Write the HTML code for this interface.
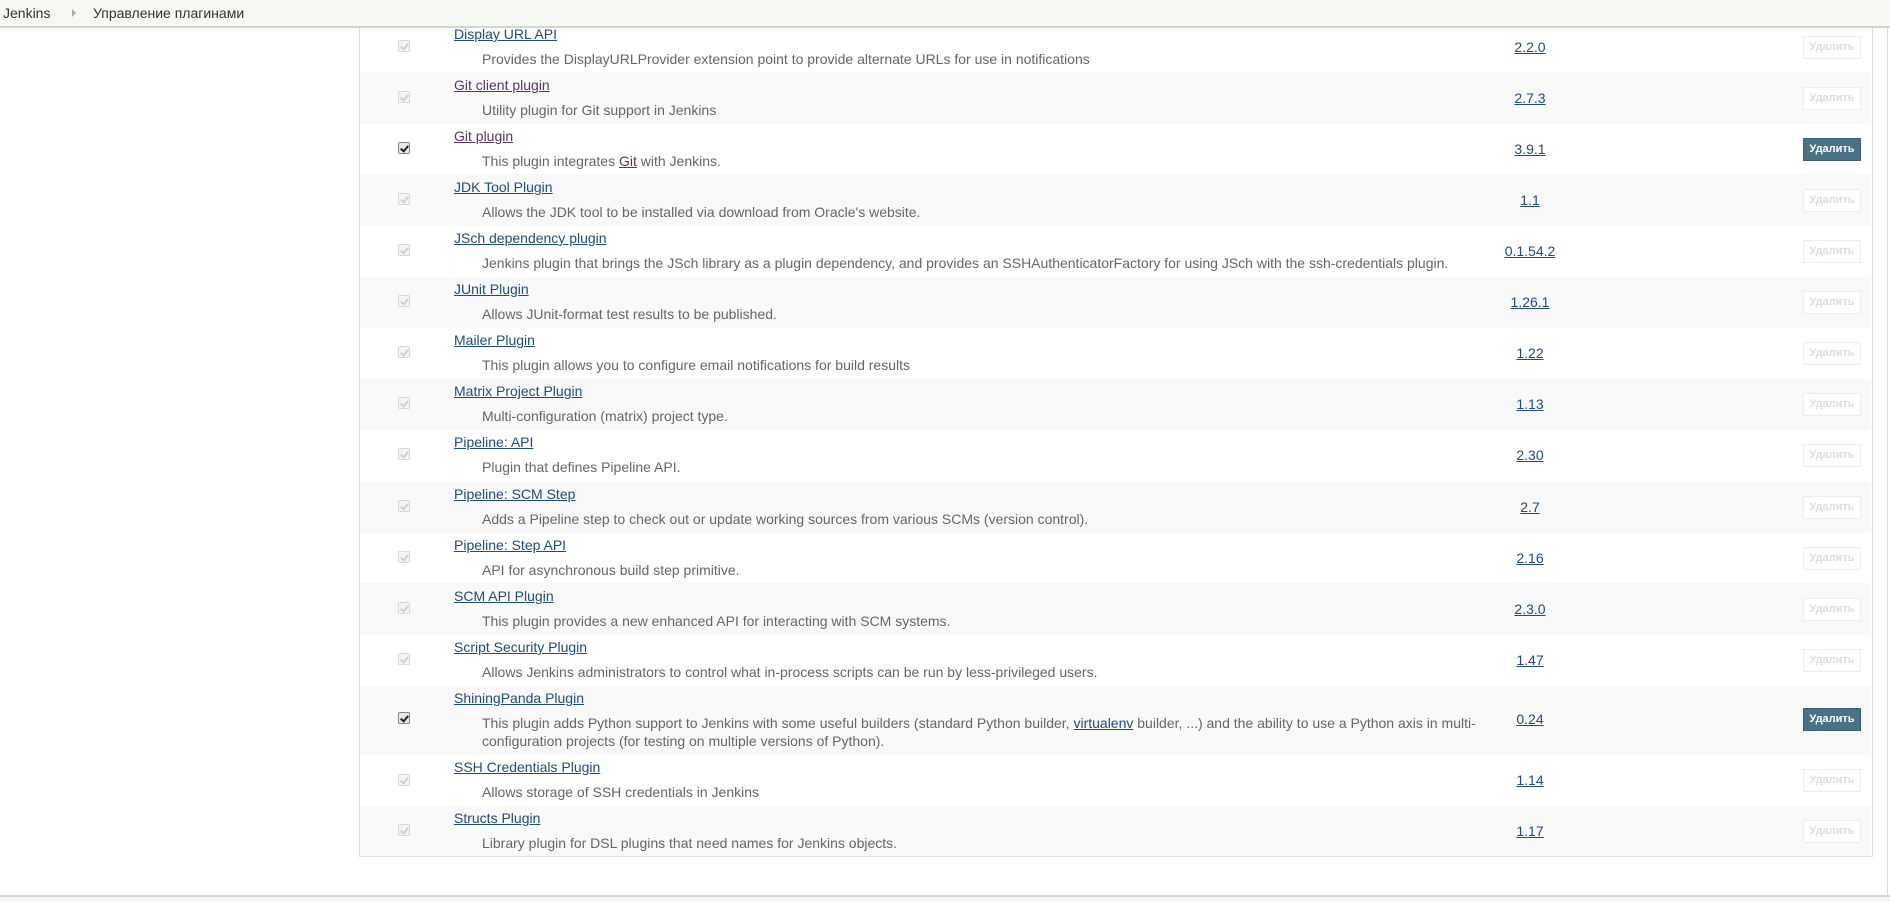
<!DOCTYPE html>
<html><head><meta charset="utf-8"><style>
body{margin:0;width:1890px;height:900px;overflow:hidden;background:#fff;font-family:"Liberation Sans",Arial,sans-serif;position:relative}
.hdr{position:absolute;left:0;top:0;width:1890px;height:26px;background:#f6f8f2;border-bottom:2px solid #d3d7cf;z-index:5;font-size:14px;color:#333}
.hdr .a{position:absolute;left:3px;top:5px}
.hdr .s{position:absolute;left:72px;top:9px;width:0;height:0;border-left:4px solid #aaa;border-top:4px solid transparent;border-bottom:4px solid transparent}
.hdr .b{position:absolute;left:93px;top:5px}
.tbl{position:absolute;left:359px;top:0;width:1512px;height:856px;border:1px solid #e2e2e2;border-top:none}
.row{position:absolute;left:360px;width:1511px}
.row.alt{background:#f9f9f9}
.cb{position:absolute;left:398px;width:12px;height:12px;border:1px solid #d8d8d8;border-radius:2px;background:#f4f4f4;box-sizing:border-box}
.cb::after{content:"";position:absolute;left:3px;top:1px;width:3px;height:6px;border:solid #d0d0d0;border-width:0 2px 2px 0;transform:rotate(40deg)}
.cb.on{border-color:#888;background:#e8e8e8}
.cb.on::after{border-color:#222}
.nm{position:absolute;left:454px;color:#204a87;text-decoration:underline;white-space:nowrap;font-size:14px}
.nm.v{color:#5c3566}
.ds{position:absolute;left:482px;color:#666;width:1000px;line-height:18px;font-size:14px}
.ds a{color:#204a87;text-decoration:underline}
.ds a.v{color:#5c3566}
.ver{position:absolute;left:1480px;width:100px;text-align:center;color:#204a87;text-decoration:underline;font-size:14px}
.btn{position:absolute;left:1803px;width:58px;height:23px;box-sizing:border-box;border:1px solid #eee;font-size:11px;font-weight:bold;color:#ddd;text-align:center;line-height:21px;background:#fff}
.btn.on{background:#4a7186;border-color:#3d6275;color:#fff}
.ftr{position:absolute;left:0;top:895px;width:1890px;height:5px;background:#f6f8f2;border-top:2px solid #d3d7cf}
.edge{position:absolute;left:1887px;top:28px;width:1px;height:867px;background:#ddd}
</style></head><body>
<div class="hdr"><span class="a">Jenkins</span><span class="s"></span><span class="b">Управление плагинами</span></div>
<div class="tbl"></div>
<div class="edge"></div>
<div class="ftr"></div>

<div class="row" style="top:21px;height:51px"></div>
<div class="cb" style="top:40px"></div>
<div class="nm" style="top:26px">Display URL API</div>
<div class="ds" style="top:50px">Provides the DisplayURLProvider extension point to provide alternate URLs for use in notifications</div>
<div class="ver" style="top:39px">2.2.0</div>
<div class="btn" style="top:36px">Удалить</div>

<div class="row alt" style="top:72px;height:52px"></div>
<div class="cb" style="top:91px"></div>
<div class="nm v" style="top:77px">Git client plugin</div>
<div class="ds" style="top:101px">Utility plugin for Git support in Jenkins</div>
<div class="ver" style="top:90px">2.7.3</div>
<div class="btn" style="top:87px">Удалить</div>

<div class="row" style="top:124px;height:50px"></div>
<div class="cb on" style="top:142px"></div>
<div class="nm v" style="top:128px">Git plugin</div>
<div class="ds" style="top:152px">This plugin integrates <a class="v">Git</a> with Jenkins.</div>
<div class="ver" style="top:141px">3.9.1</div>
<div class="btn on" style="top:138px">Удалить</div>

<div class="row alt" style="top:174px;height:52px"></div>
<div class="cb" style="top:193px"></div>
<div class="nm" style="top:179px">JDK Tool Plugin</div>
<div class="ds" style="top:203px">Allows the JDK tool to be installed via download from Oracle's website.</div>
<div class="ver" style="top:192px">1.1</div>
<div class="btn" style="top:189px">Удалить</div>

<div class="row" style="top:226px;height:51px"></div>
<div class="cb" style="top:244px"></div>
<div class="nm" style="top:230px">JSch dependency plugin</div>
<div class="ds" style="top:254px;width:1040px;white-space:nowrap">Jenkins plugin that brings the JSch library as a plugin dependency, and provides an SSHAuthenticatorFactory for using JSch with the ssh-credentials plugin.</div>
<div class="ver" style="top:243px">0.1.54.2</div>
<div class="btn" style="top:240px">Удалить</div>

<div class="row alt" style="top:277px;height:51px"></div>
<div class="cb" style="top:295px"></div>
<div class="nm" style="top:281px">JUnit Plugin</div>
<div class="ds" style="top:305px">Allows JUnit-format test results to be published.</div>
<div class="ver" style="top:294px">1.26.1</div>
<div class="btn" style="top:291px">Удалить</div>

<div class="row" style="top:328px;height:51px"></div>
<div class="cb" style="top:346px"></div>
<div class="nm" style="top:332px">Mailer Plugin</div>
<div class="ds" style="top:356px">This plugin allows you to configure email notifications for build results</div>
<div class="ver" style="top:345px">1.22</div>
<div class="btn" style="top:342px">Удалить</div>

<div class="row alt" style="top:379px;height:51px"></div>
<div class="cb" style="top:397px"></div>
<div class="nm" style="top:383px">Matrix Project Plugin</div>
<div class="ds" style="top:407px">Multi-configuration (matrix) project type.</div>
<div class="ver" style="top:396px">1.13</div>
<div class="btn" style="top:393px">Удалить</div>

<div class="row" style="top:430px;height:52px"></div>
<div class="cb" style="top:448px"></div>
<div class="nm" style="top:434px">Pipeline: API</div>
<div class="ds" style="top:458px">Plugin that defines Pipeline API.</div>
<div class="ver" style="top:447px">2.30</div>
<div class="btn" style="top:444px">Удалить</div>

<div class="row alt" style="top:482px;height:51px"></div>
<div class="cb" style="top:500px"></div>
<div class="nm" style="top:486px">Pipeline: SCM Step</div>
<div class="ds" style="top:510px">Adds a Pipeline step to check out or update working sources from various SCMs (version control).</div>
<div class="ver" style="top:499px">2.7</div>
<div class="btn" style="top:496px">Удалить</div>

<div class="row" style="top:533px;height:50px"></div>
<div class="cb" style="top:551px"></div>
<div class="nm" style="top:537px">Pipeline: Step API</div>
<div class="ds" style="top:561px">API for asynchronous build step primitive.</div>
<div class="ver" style="top:550px">2.16</div>
<div class="btn" style="top:547px">Удалить</div>

<div class="row alt" style="top:583px;height:52px"></div>
<div class="cb" style="top:602px"></div>
<div class="nm" style="top:588px">SCM API Plugin</div>
<div class="ds" style="top:612px">This plugin provides a new enhanced API for interacting with SCM systems.</div>
<div class="ver" style="top:601px">2.3.0</div>
<div class="btn" style="top:598px">Удалить</div>

<div class="row" style="top:635px;height:51px"></div>
<div class="cb" style="top:653px"></div>
<div class="nm" style="top:639px">Script Security Plugin</div>
<div class="ds" style="top:663px">Allows Jenkins administrators to control what in-process scripts can be run by less-privileged users.</div>
<div class="ver" style="top:652px">1.47</div>
<div class="btn" style="top:649px">Удалить</div>

<div class="row alt" style="top:686px;height:69px"></div>
<div class="cb on" style="top:712px"></div>
<div class="nm" style="top:690px">ShiningPanda Plugin</div>
<div class="ds" style="top:714px;width:1000px">This plugin adds Python support to Jenkins with some useful builders (standard Python builder, <a>virtualenv</a> builder, ...) and the ability to use a Python axis in multi-configuration projects (for testing on multiple versions of Python).</div>
<div class="ver" style="top:711px">0.24</div>
<div class="btn on" style="top:708px">Удалить</div>

<div class="row" style="top:755px;height:51px"></div>
<div class="cb" style="top:774px"></div>
<div class="nm" style="top:759px">SSH Credentials Plugin</div>
<div class="ds" style="top:783px">Allows storage of SSH credentials in Jenkins</div>
<div class="ver" style="top:772px">1.14</div>
<div class="btn" style="top:769px">Удалить</div>

<div class="row alt" style="top:806px;height:50px"></div>
<div class="cb" style="top:824px"></div>
<div class="nm" style="top:810px">Structs Plugin</div>
<div class="ds" style="top:834px">Library plugin for DSL plugins that need names for Jenkins objects.</div>
<div class="ver" style="top:823px">1.17</div>
<div class="btn" style="top:820px">Удалить</div>
</body></html>
